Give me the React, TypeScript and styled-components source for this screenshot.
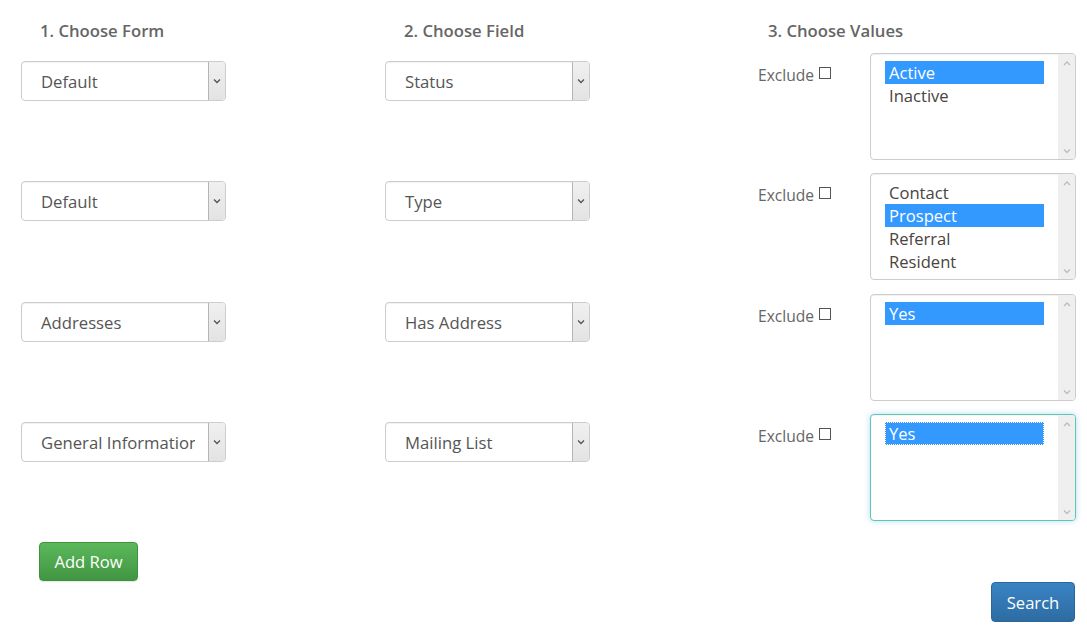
import React from "react";
import styled, { createGlobalStyle } from "styled-components";

const Global = createGlobalStyle`
  html, body { margin: 0; padding: 0; background: #fff; }
  body { font-family: "Open Sans", "Liberation Sans", sans-serif; color: #555; }
  * { box-sizing: border-box; }
`;

const Page = styled.div`
  width: 1087px;
  height: 628px;
  padding: 20px 11px 0 21px;
  display: flex;
  flex-direction: column;
`;

const Grid = styled.div`
  display: grid;
  grid-template-columns: 364px 364px 1fr;
`;

const Heading = styled.div`
  font-size: 16.7px;
  font-weight: 600;
  color: #666;
  padding-left: 19px;
  height: 33px;
  line-height: 22px;
`;

const Row = styled.div`
  display: contents;
`;

const Cell = styled.div`
  height: 120.3px;
  padding-top: 8px;
`;

const SelectBox = styled.div`
  width: 205px;
  height: 40px;
  border: 1px solid #ccc;
  border-radius: 4px;
  box-shadow: inset 0 1px 1px rgba(0, 0, 0, 0.06);
  display: flex;
  align-items: stretch;
  overflow: hidden;
  background: #fff;
`;

const SelectText = styled.div`
  flex: 1;
  min-width: 0;
  padding-left: 19px;
  font-size: 16.7px;
  line-height: 40px;
  color: #555;
  white-space: nowrap;
  overflow: hidden;
  margin-right: 13px;
`;

const ArrowBox = styled.div`
  width: 17px;
  flex: none;
  background: linear-gradient(#f0f0f0, #e3e3e3);
  border-left: 1px solid #b5b5b5;
  display: flex;
  align-items: center;
  justify-content: center;
`;

const ValuesCell = styled.div`
  height: 120.3px;
  display: flex;
  padding-left: 9px;
`;

const ExcludeLabel = styled.label`
  font-size: 15.6px;
  color: #666;
  width: 112px;
  padding-top: 10px;
  display: flex;
  align-items: flex-start;
  gap: 5px;
  line-height: 24px;
`;

const Check = styled.span`
  display: inline-block;
  width: 12px;
  height: 12px;
  border: 1px solid #555;
  margin-top: 4px;
  background: #fff;
`;

const ListBox = styled.div<{ $focus?: boolean }>`
  width: 206px;
  height: 107px;
  border: 1px solid ${(p) => (p.$focus ? "#5cc8b4" : "#ccc")};
  border-radius: 4px;
  box-shadow: ${(p) =>
    p.$focus
      ? "0 0 6px rgba(102, 175, 233, 0.45), inset 0 1px 1px rgba(0,0,0,0.05)"
      : "inset 0 1px 1px rgba(0,0,0,0.06)"};
  display: flex;
  overflow: hidden;
  background: #fff;
`;

const Options = styled.div`
  flex: 1;
  padding: 7px 14px 0 14px;
`;

const Option = styled.div<{ $sel?: boolean; $focus?: boolean }>`
  font-size: 16.6px;
  height: 23px;
  line-height: 23px;
  padding-left: 4px;
  color: ${(p) => (p.$sel ? "#fff" : "#4a4440")};
  background: ${(p) => (p.$sel ? "#3399ff" : "transparent")};
  outline: ${(p) => (p.$focus ? "1px dotted #fff" : "none")};
  outline-offset: -1px;
`;

const Scrollbar = styled.div`
  width: 17px;
  background: #efefef;
  display: flex;
  flex-direction: column;
  justify-content: space-between;
  align-items: center;
  padding: 6px 0 5px;
`;

const ButtonRow = styled.div`
  padding: 8px 0 0 18px;
  display: flex;
`;

const GreenButton = styled.button`
  width: 99px;
  height: 39px;
  border: 1px solid #3d9140;
  border-radius: 4px;
  background: linear-gradient(#5cb85c, #419641);
  color: #fff;
  font-family: "Open Sans", "Liberation Sans", sans-serif;
  font-size: 16.6px;
  box-shadow: 0 1px 1px rgba(0,0,0,0.1);
`;

const SearchRow = styled.div`
  display: flex;
  justify-content: flex-end;
  padding-right: 1px;
  padding-top: 1px;
`;

const BlueButton = styled.button`
  width: 84px;
  height: 40px;
  border: 1px solid #2b669a;
  border-radius: 4px;
  background: linear-gradient(#3a83c4, #2d6ca2);
  color: #fff;
  font-family: "Open Sans", "Liberation Sans", sans-serif;
  font-size: 16.6px;
`;

const Chevron = ({ up, color = "#666" }: { up?: boolean; color?: string }) => (
  <svg width="8" height="6" viewBox="0 0 8 6">
    <path
      d={up ? "M1 5 L4 2 L7 5" : "M1 1.5 L4 4.5 L7 1.5"}
      fill="none"
      stroke={color}
      strokeWidth="1.3"
    />
  </svg>
);

const Select = ({ value }: { value: string }) => (
  <SelectBox>
    <SelectText>{value}</SelectText>
    <ArrowBox>
      <Chevron color="#555" />
    </ArrowBox>
  </SelectBox>
);

type RowData = {
  form: string;
  field: string;
  options: string[];
  selected: number;
  focus?: boolean;
};

const rows: RowData[] = [
  { form: "Default", field: "Status", options: ["Active", "Inactive"], selected: 0 },
  { form: "Default", field: "Type", options: ["Contact", "Prospect", "Referral", "Resident"], selected: 1 },
  { form: "Addresses", field: "Has Address", options: ["Yes"], selected: 0 },
  { form: "General Information", field: "Mailing List", options: ["Yes"], selected: 0, focus: true },
];

export default function App() {
  return (
    <Page>
      <Global />
      <Grid>
        <Heading>1. Choose Form</Heading>
        <Heading>2. Choose Field</Heading>
        <Heading>3. Choose Values</Heading>
        {rows.map((r, i) => (
          <Row key={i}>
            <Cell>
              <Select value={r.form} />
            </Cell>
            <Cell>
              <Select value={r.field} />
            </Cell>
            <ValuesCell>
              <ExcludeLabel>
                Exclude <Check />
              </ExcludeLabel>
              <ListBox $focus={r.focus}>
                <Options>
                  {r.options.map((o, j) => (
                    <Option key={o} $sel={j === r.selected} $focus={r.focus && j === r.selected}>
                      {o}
                    </Option>
                  ))}
                </Options>
                <Scrollbar>
                  <Chevron up color="#bdbdbd" />
                  <Chevron color="#bdbdbd" />
                </Scrollbar>
              </ListBox>
            </ValuesCell>
          </Row>
        ))}
      </Grid>
      <ButtonRow>
        <GreenButton>Add Row</GreenButton>
      </ButtonRow>
      <SearchRow>
        <BlueButton>Search</BlueButton>
      </SearchRow>
    </Page>
  );
}
